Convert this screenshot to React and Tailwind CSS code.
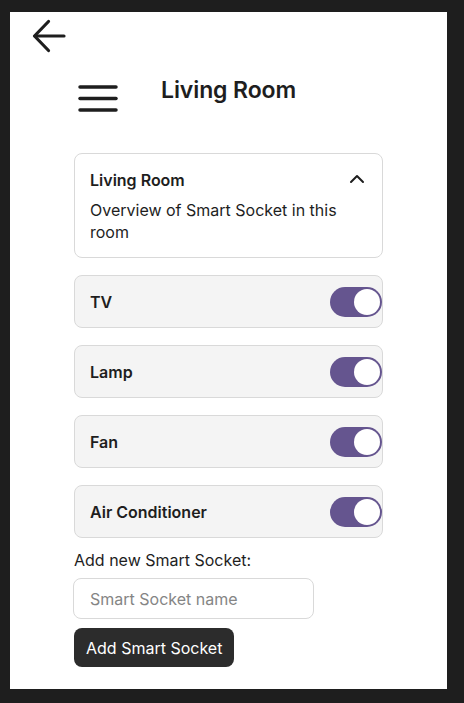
import React from "react";

function Toggle() {
  return (
    <div className="w-[52px] h-[30px] rounded-full bg-[#65558F] flex items-center justify-end pr-[2px]">
      <div className="w-[26px] h-[26px] rounded-full bg-white" />
    </div>
  );
}

function Row({ label }) {
  return (
    <div className="w-[309px] h-[53px] rounded-lg border border-[#d9d9d9] bg-[#f4f4f4] flex items-center justify-between pl-[15px]">
      <span className="text-[16px] leading-[22px] font-semibold text-[#1e1e1e]">{label}</span>
      <Toggle />
    </div>
  );
}

export default function App() {
  return (
    <div
      className="w-[464px] h-[703px] bg-[#1e1e1e] pt-[12px] pl-[10px]"
      style={{ fontFamily: "Inter, 'Noto Sans', sans-serif" }}
    >
      <div className="w-[437px] h-[677px] bg-white flex flex-col">
        <svg
          className="ml-[22px] mt-[7px]"
          width="34"
          height="34"
          viewBox="0 0 34 34"
          fill="none"
          stroke="#1e1e1e"
          strokeWidth="3.2"
          strokeLinecap="round"
          strokeLinejoin="round"
        >
          <path d="M32 17H3" />
          <path d="M16.5 2.5L2.5 17L16.5 31.5" />
        </svg>

        <div className="flex items-start ml-[68px] mt-[23px]">
          <svg
            className="mt-[9px]"
            width="40"
            height="27"
            viewBox="0 0 40 27"
            fill="none"
            stroke="#1e1e1e"
            strokeWidth="3.5"
            strokeLinecap="round"
          >
            <path d="M2 2H38" />
            <path d="M2 13.5H38" />
            <path d="M2 25H38" />
          </svg>
          <h1 className="ml-[43px] text-[23px] leading-[28px] font-semibold text-[#1e1e1e] tracking-[-0.1px]">
            Living Room
          </h1>
        </div>

        <div className="ml-[64px] mt-[41px] flex flex-col gap-[17px]">
          <div className="w-[309px] h-[105px] rounded-lg border border-[#d9d9d9] bg-white pt-[15px] px-[15px] flex flex-col gap-[8px]">
            <div className="flex items-center justify-between">
              <span className="text-[16px] leading-[22px] font-semibold text-[#1e1e1e]">Living Room</span>
              <svg
                width="20"
                height="20"
                viewBox="0 0 20 20"
                fill="none"
                stroke="#1e1e1e"
                strokeWidth="2"
                strokeLinecap="round"
                strokeLinejoin="round"
              >
                <path d="M4 12L10 6L16 12" />
              </svg>
            </div>
            <p className="text-[16px] leading-[22px] text-[#1e1e1e]">
              Overview of Smart Socket in this room
            </p>
          </div>

          <Row label="TV" />
          <Row label="Lamp" />
          <Row label="Fan" />
          <Row label="Air Conditioner" />
        </div>

        <div className="ml-[64px] mt-[11px] flex flex-col items-start">
          <label className="text-[16px] leading-[22px] text-[#1e1e1e]">Add new Smart Socket:</label>
          <input
            className="mt-[7px] -ml-[1px] w-[241px] h-[41px] rounded-lg border border-[#d9d9d9] bg-white pl-[16px] text-[16px] text-[#1e1e1e] placeholder:text-[#858585] outline-none"
            placeholder="Smart Socket name"
          />
          <button className="mt-[9px] h-[39px] px-[12px] rounded-lg bg-[#2c2c2c] text-white text-[16px] leading-[22px]">
            Add Smart Socket
          </button>
        </div>
      </div>
    </div>
  );
}
